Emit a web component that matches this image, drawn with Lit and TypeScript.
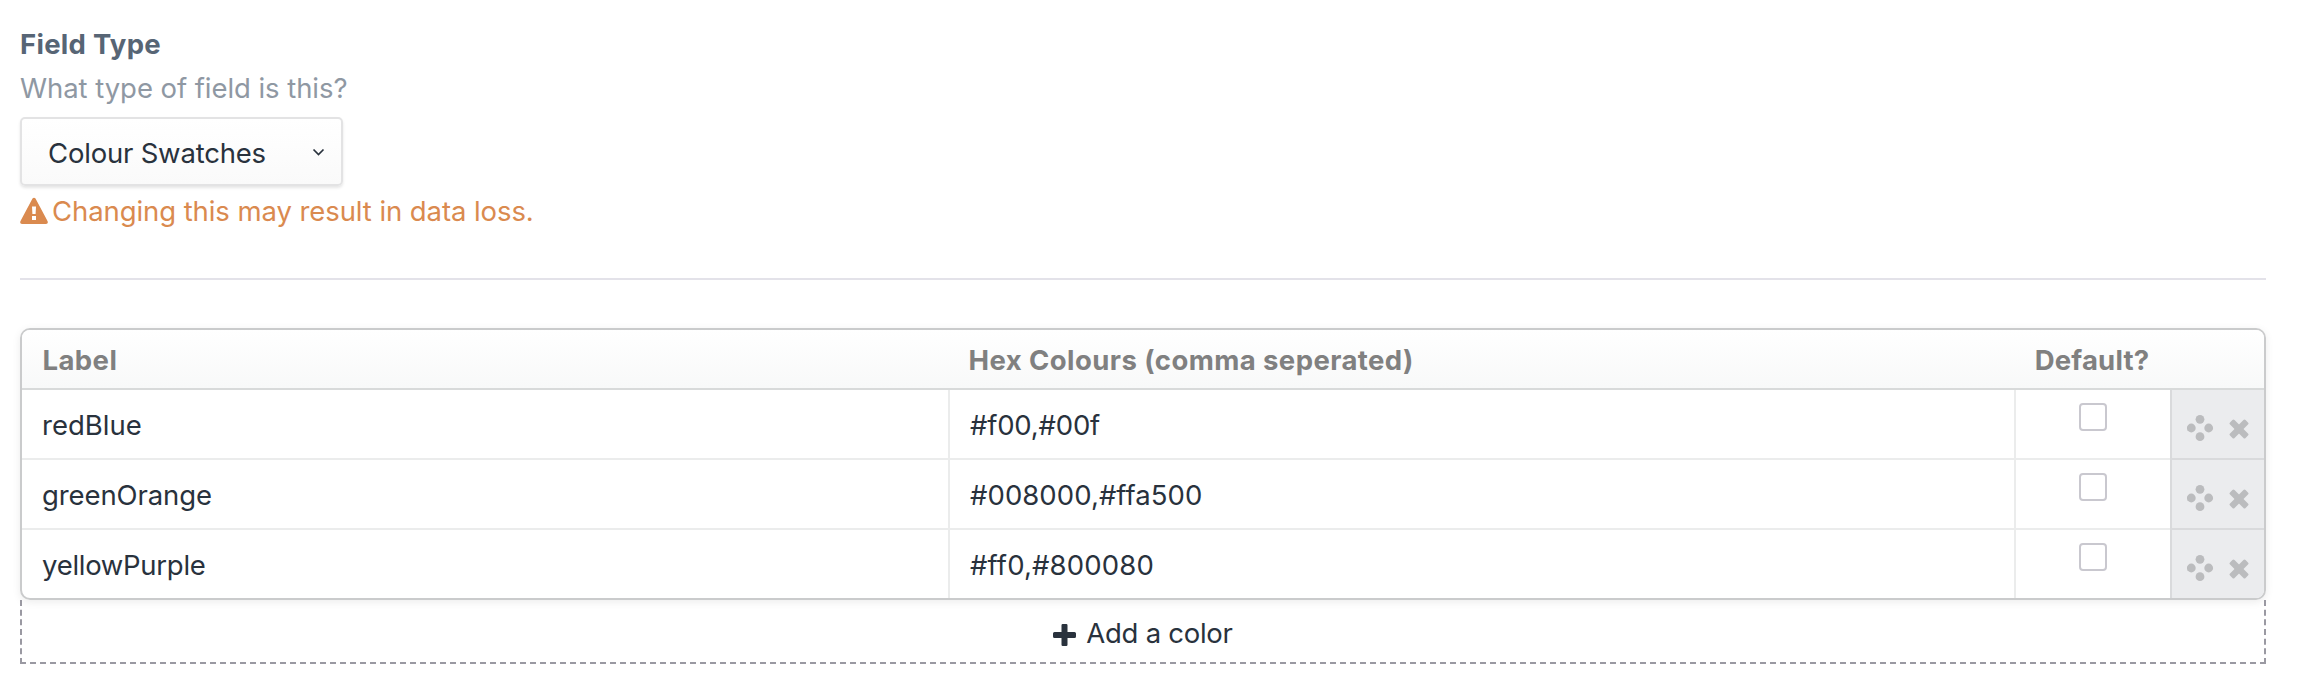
import { LitElement, html, css } from "lit";
import { styleMap } from "lit/directives/style-map.js";

interface Swatch { label: string; colors: string; labelTracking: number; colorTracking: number }

class AppRoot extends LitElement {
  static styles = css`
    :host { display: block; box-sizing: border-box; height: 698px; overflow: hidden; padding: 26px 32px 0 20px; background: #fff; color: #29323d; font: 400 27.5px/36px "Inter", sans-serif; }
    * { box-sizing: border-box; }
    svg { display: block; flex: none; }
    .title { font-weight: 700; color: #576575; letter-spacing: .28px; }
    .hint { margin-top: 8px; color: #8f98a3; letter-spacing: -.06px; }
    .select { display: flex; justify-content: space-between; margin-top: 11px; width: 323px; height: 69px; padding: 16px 16px 0 26px; border: 2px solid #e3e3e4; border-radius: 5px; background: linear-gradient(#fff, #fafafa); box-shadow: 0 2px 3px rgba(0,0,0,.1); letter-spacing: -.2px; }
    .chevron { margin-top: 13px; }
    .warning { display: flex; gap: 4px; margin-top: 7px; color: #da8a4f; letter-spacing: -.08px; }
    .warning svg { margin-top: 4px; }
    hr { margin: 49px 0 48px; border: 0; height: 2px; background: #e3e2e9; }
    .table { border: 2px solid #cacbcc; border-radius: 10px; overflow: hidden; background: #fff; }
    .frame { border-radius: 10px; box-shadow: 0 2px 8px rgba(0,0,0,.08); }
    .row { display: grid; grid-template-columns: 926px 1fr 156px 94px; height: 70px; }
    .row:last-child { height: 68px; }
    .head { height: 60px; border-bottom: 2px solid #d8dada; background: linear-gradient(#fff, #f8f9f9); color: #808080; font-weight: 700; letter-spacing: .42px; }
    .head div { padding: 12px 0 0 20.500px; }
    .head .center { padding-left: 0; text-align: center; letter-spacing: .2px; }
    .cell { padding: 17px 0 0 20px; border-bottom: 2px solid #ebecec; }
    .cell + .cell { border-left: 2px solid #ebecec; }
    .row:last-child .cell { border-bottom: 0; }
    .row .check { padding: 13px 0 0; display: flex; justify-content: center; }
    .box { width: 28px; height: 28px; border: 2px solid #c9c8cf; border-radius: 4px; }
    .row .actions { display: flex; padding: 24px 0 0 15px; gap: 15px; background: #ebecee; border-color: #d9dadc; color: #bbbcbe; }
    .add { display: flex; justify-content: center; gap: 10px; height: 64px; padding-top: 15px; border: 2px dashed #9a99a2; border-top: 0; letter-spacing: -.27px; }
    .add svg { margin-top: 9px; }
  `;
  rows: Swatch[] = [
    { label: "redBlue", colors: "#f00,#00f", labelTracking: 0, colorTracking: -.2 },
    { label: "greenOrange", colors: "#008000,#ffa500", labelTracking: -.1, colorTracking: .06 },
    { label: "yellowPurple", colors: "#ff0,#800080", labelTracking: -.28, colorTracking: .15 },
  ];
  render() {
    return html`
      <div class="title">Field Type</div>
      <div class="hint">What type of field is this?</div>
      <div class="select"><span>Colour Swatches</span>
        <svg class="chevron" width="13" height="9" viewBox="0 0 13 9"><path d="M1.500 1.500 6.500 6.500 11.500 1.500" fill="none" stroke="#29323d" stroke-width="1.700"/></svg></div>
      <div class="warning">
        <svg width="28" height="28" viewBox="0 0 28 28"><path fill="currentColor" fill-rule="evenodd" d="M12.500 1.600Q14-.2 15.500 1.600L27.500 24Q28.600 27 26 27H2Q-.6 27 .5 24ZM12 9.500 12.400 17H15.600L16 9.500ZM12 19V23H16V19Z"/></svg>
        <span>Changing this may result in data loss.</span></div>
      <hr>
      <div class="frame"><div class="table">
        <div class="row head"><div>Label</div><div>Hex Colours (comma seperated)</div><div class="center">Default?</div><div></div></div>
        ${this.rows.map(r => html`<div class="row">
          <div class="cell" style=${styleMap({ letterSpacing: r.labelTracking + "px" })}>${r.label}</div>
          <div class="cell" style=${styleMap({ letterSpacing: r.colorTracking + "px" })}>${r.colors}</div>
          <div class="cell check"><span class="box"></span></div>
          <div class="cell actions">
            <svg width="27" height="28" viewBox="0 0 27 28" fill="currentColor"><circle cx="13" cy="5.300" r="4.400"/><circle cx="4.300" cy="14" r="4.400"/><circle cx="21.700" cy="14" r="4.400"/><circle cx="13" cy="22.700" r="4.400"/></svg>
            <svg width="20" height="28" viewBox="0 0 20 28" fill="currentColor"><g transform="translate(10 15) rotate(45)"><rect x="-11" y="-3.200" width="22" height="6.400" rx="1.500"/><rect x="-3.200" y="-11" width="6.400" height="22" rx="1.500"/></g></svg>
          </div></div>`)}
      </div></div>
      <div class="add">
        <svg width="23" height="22" viewBox="0 0 23 22"><path fill="#29323d" d="M9.700 0h3.600q1.200 0 1.200 1.200v6.800h7q1.500 0 1.500 1.500v3q0 1.500-1.500 1.500h-7v6.800q0 1.200-1.200 1.200h-3.600q-1.200 0-1.200-1.200V14h-7Q0 14 0 12.500v-3Q0 8 1.500 8h7V1.200Q8.500 0 9.700 0Z"/></svg>
        <span>Add a color</span></div>`;
  }
}
customElements.define("app-root", AppRoot);
